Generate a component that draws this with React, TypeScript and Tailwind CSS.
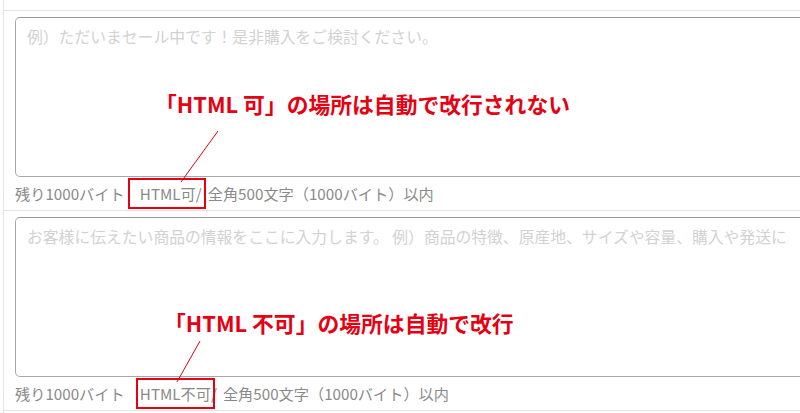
export default function App() {
  const jp = { fontFamily: '"Noto Sans CJK JP", "Noto Sans", sans-serif' };

  return (
    <div className="relative w-[800px] h-[413px] overflow-hidden bg-white" style={jp}>
      <div className="ml-[3px] h-full border-l border-[#e2e2e2]">
        {/* top row (cut off) */}
        <div className="h-[11px] border-b border-[#e2e2e2]" />

        {/* field 1 */}
        <div className="pl-[11px] pt-[6px] border-b border-[#e2e2e2]">
          <div className="w-[900px] h-[160px] rounded-[5px] border border-[#a8a8a8] border-t-[#999] px-[11px] pt-[8px]">
            <p className="whitespace-nowrap text-[15.8px] leading-[22px] text-[#d2d2d2]">
              例）ただいまセール中です！是非購入をご検討ください。
            </p>
          </div>
          <div className="h-[33px] flex items-center whitespace-nowrap text-[15.2px] text-[#8a8a8a]">
            <span>残り1000バイト　</span>
            <span className="relative mr-[6px]">
              HTML可/
              <span className="absolute -left-[12px] -right-[4px] -top-[4px] -bottom-[4px] border-2 border-[#e60012]" />
            </span>
            <span>全角500文字（1000バイト）以内</span>
          </div>
        </div>

        {/* field 2 */}
        <div className="pl-[11px] pt-[6px] border-b border-[#e2e2e2]">
          <div className="w-[900px] h-[160px] rounded-[5px] border border-[#a8a8a8] border-t-[#999] px-[11px] pt-[8px]">
            <p className="whitespace-nowrap text-[15.8px] leading-[22px] text-[#d2d2d2]">
              お客様に伝えたい商品の情報をここに入力します。 例）商品の特徴、原産地、サイズや容量、購入や発送に
            </p>
          </div>
          <div className="h-[33px] flex items-center whitespace-nowrap text-[15.2px] text-[#8a8a8a]">
            <span>残り1000バイト　</span>
            <span className="relative mr-[6px]">
              HTML不可/
              <span className="absolute -left-[4px] right-[2px] -top-[4px] -bottom-[4px] border-2 border-[#e60012]" />
            </span>
            <span>全角500文字（1000バイト）以内</span>
          </div>
        </div>
      </div>

      {/* annotations */}
      <p className="absolute left-[155px] top-[93px] whitespace-nowrap text-[21.8px] leading-none font-bold text-[#e60012]">
        「HTML 可」の場所は自動で改行されない
      </p>
      <svg className="absolute left-0 top-0" width="800" height="413">
        <line x1="218" y1="131" x2="181" y2="182" stroke="#e60012" strokeWidth="1" />
        <line x1="200" y1="341" x2="177" y2="382" stroke="#e60012" strokeWidth="1" />
      </svg>
      <p className="absolute left-[164px] top-[312px] whitespace-nowrap text-[21.8px] leading-none font-bold text-[#e60012]">
        「HTML 不可」の場所は自動で改行
      </p>
    </div>
  );
}
